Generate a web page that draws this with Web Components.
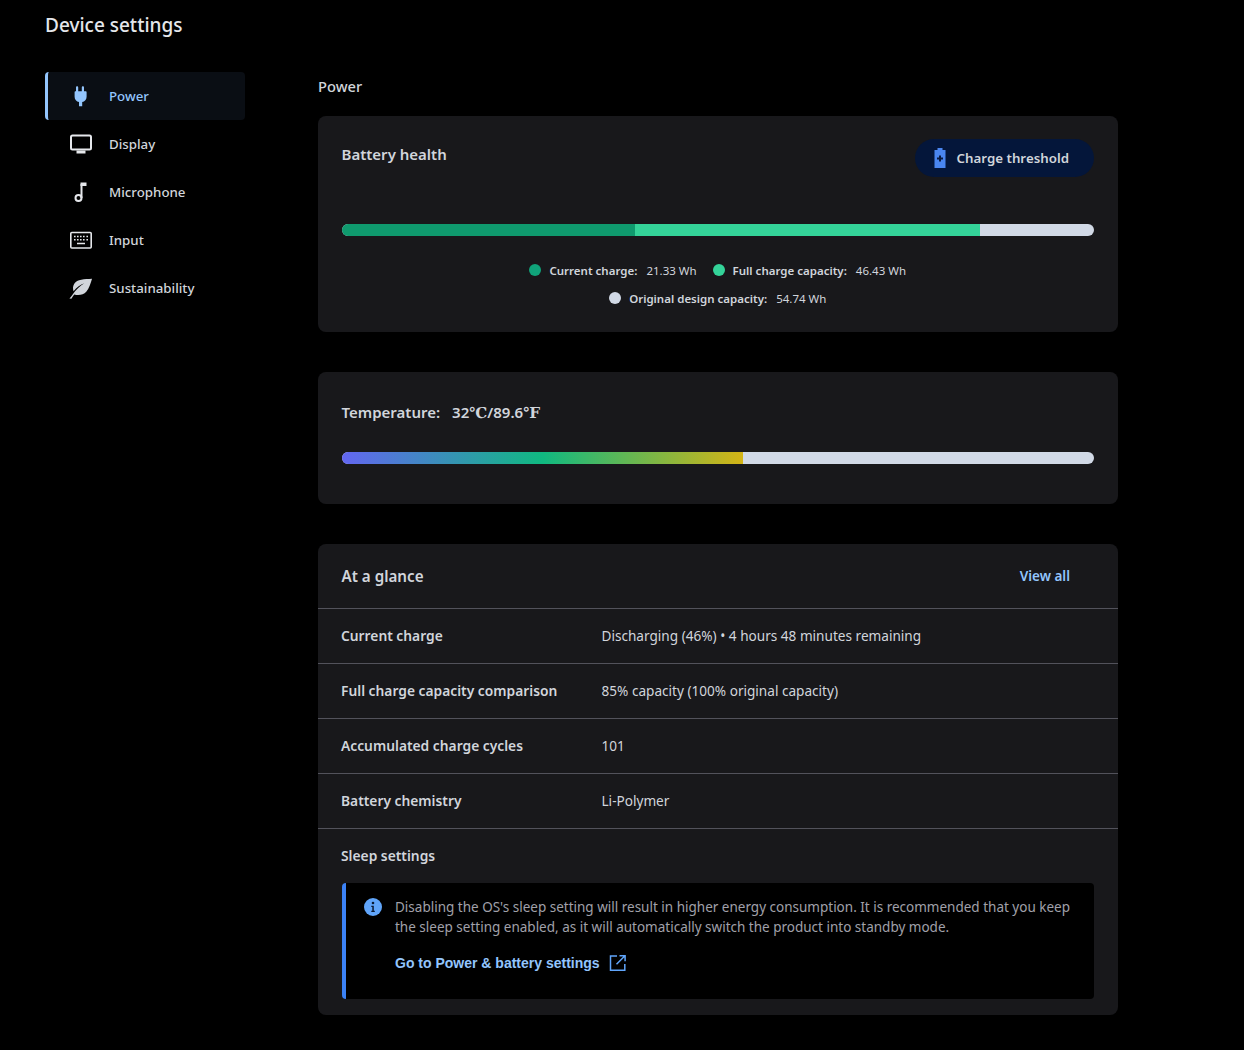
<!DOCTYPE html>
<html><head><meta charset="utf-8"><style>
html,body{margin:0;background:#000;height:1050px;overflow:hidden}
body{font-family:"Noto Sans","Open Sans",sans-serif;color:#d1d5db}
</style></head><body>
<device-page></device-page>
<script>
const el=(name,css,html)=>{customElements.define(name,class extends HTMLElement{constructor(){super();this.attachShadow({mode:'open'}).innerHTML=`<style>${css}</style>${typeof html==='function'?html(this):html}`;}})};

const ICONS={
power:`<svg width="24" height="24" viewBox="0 0 24 24" fill="#93c5fd" style="margin-left:-2px"><path d="M8 3.400c0-.7.5-1.200 1.100-1.200s1.100.5 1.100 1.200v3.800h3.600V3.400c0-.7.5-1.200 1.100-1.200s1.100.5 1.100 1.200v3.800h1.500c.7 0 1.100.4 1.100 1v4.600c0 2.700-1.900 4.800-4.400 5.300v4.100h-3.200v-4.100c-2.500-.5-4.400-2.600-4.400-5.300V8.200c0-.6.400-1 1.100-1H8z"/></svg>`,
display:`<svg width="24" height="24" viewBox="0 0 24 24" fill="none" stroke="#e5e7eb" stroke-width="2"><rect x="2" y="3.500" width="20" height="14" rx="1.500"/><path d="M7.500 20h9" stroke-width="3"/></svg>`,
mic:`<svg width="24" height="24" viewBox="0 0 24 24" fill="none" stroke="#e5e7eb" stroke-width="2"><circle cx="9.500" cy="18" r="3"/><path d="M12.500 18V4"/><path d="M11.500 2.500h6v3.500h-6z" fill="#e5e7eb" stroke="none"/></svg>`,
input:`<svg width="24" height="24" viewBox="0 0 24 24" fill="none"><rect x="1.800" y="4.500" width="20.400" height="15.500" rx="1" stroke="#e5e7eb" stroke-width="1.600"/><path d="M5 8.500h1.600M8 8.500h1.600M11 8.500h1.600M14 8.500h1.600M17.400 8.500H19M5 11.800h1.600M8 11.800h1.600M11 11.800h1.600M14 11.800h1.600M17.400 11.800H19M8 15.500h8" stroke="#e5e7eb" stroke-width="1.600"/></svg>`,
leaf:`<svg width="26" height="24" viewBox="0 0 26 24" style="margin-left:-1px"><path d="M25 2.500C17 3 9.500 3 6.500 7.500 4.800 10 5 13 5.800 15.500 9 11 13 8.500 17 7 13 9.500 8 13.500 5 18.500 3.800 20.300 2.800 21.500 1.500 23l2 .2c1-1.600 2-3.200 3-4.400 4.500 1.200 9.500.5 12.500-2.800 3-3.300 4.500-8.500 6-13.500z" fill="#d1d5db"/></svg>`,
battery:`<svg width="12" height="20" viewBox="0 0 12 20"><path d="M3.500 0h5v2h3v18H.500V2h3z" fill="#4a86f0"/><path d="M6 7.500v6M3 10.500h6" stroke="#0a1a40" stroke-width="2"/></svg>`,
info:`<svg width="18" height="18" viewBox="0 0 18 18"><circle cx="9" cy="9" r="9" fill="#60a5fa"/><circle cx="9" cy="5" r="1.300" fill="#0a1a33"/><path d="M7.300 7.700h2.500v5h1v1.200H7.300v-1.200h1v-3.800h-1z" fill="#0a1a33"/></svg>`,
ext:`<svg width="18" height="18" viewBox="0 0 18 18" fill="none" stroke="#60a5fa" stroke-width="1.500"><path d="M8 2H1.500v14.300h14.300V10M10.500 1.700h5.600v5.600M16 1.700L7.500 10.200"/></svg>`
};

el('nav-item',`:host{display:flex;align-items:center;height:48px;box-sizing:border-box;width:200px;border-radius:4px;font-size:13.300px;line-height:46px;font-weight:500;color:#d1d5db;padding-left:21px;border-left:3px solid transparent}
:host([active]){background:#0a0e14;color:#93c5fd;border-left-color:#93c5fd}
.i{width:24px;height:24px;display:flex;align-items:center;justify-content:center;margin-right:16px}`,
h=>`<span class="i">${ICONS[h.getAttribute('icon')]}</span><slot></slot>`);

el('side-nav',`:host{display:flex;flex-direction:column;width:200px;flex:none}`,`<slot></slot>`);

el('panel-card',`:host{display:block;background:#18181b;border-radius:8px;box-sizing:border-box}`,`<slot></slot>`);

el('bar-track',`:host{display:flex;height:12px;border-radius:6px;overflow:hidden;background:#d1d9e6}`,`<slot></slot>`);

el('legend-item',`:host{display:inline-flex;align-items:center;font-size:11.500px;color:#d1d5db;white-space:nowrap}
i{width:12px;height:12px;border-radius:50%;margin-right:8px;background:var(--c)}
b{font-weight:600;margin-right:9px}`,h=>`<i></i><b>${h.getAttribute('label')}</b><slot></slot>`);

el('info-row',`:host{display:flex;align-items:center;height:55px;box-sizing:border-box;border-top:1px solid #52525b;padding:0 0 2px 23px;font-size:13.600px}
b{width:260.500px;flex:none;font-weight:600;font-size:13.800px;color:#d1d5db}
span{color:#d1d5db;padding-top:1px}`,h=>`<b>${h.getAttribute('label')}</b><span><slot></slot></span>`);

el('sleep-note',`:host{display:flex;background:#000;border-left:4px solid #3b82f6;border-radius:4px;margin:1px 24px 16px;height:116px;box-sizing:border-box;padding:14px 0 0 18px}
.ic{width:18px;margin:1px 13px 0 0;flex:none}
p{margin:0;font-size:13.500px;line-height:20px;color:#a1a1aa}
a{display:flex;align-items:center;margin-top:17px;font:bold 14px "Liberation Sans",sans-serif;color:#93c5fd}
a svg{margin-left:9px}`,`<div class="ic">${ICONS.info}</div><div><p><slot></slot></p><a>Go to Power &amp; battery settings ${ICONS.ext}</a></div>`);

el('device-page',`:host{display:block;width:1244px;height:1050px;box-sizing:border-box;padding:0 0 0 45px}
h1{margin:0;height:72px;padding-top:11px;box-sizing:border-box;font-size:19px;line-height:28px;font-weight:500;color:#e5e7eb}
.cols{display:flex;gap:73px}
main{width:800px;flex:none}
h2{margin:0;height:44px;font-size:14.700px;line-height:28px;font-weight:500;color:#d1d5db}
panel-card{margin-bottom:40px}
.c1{height:216px;padding:24px 24px 0 23.500px}
.top{display:flex;justify-content:space-between;align-items:flex-start;height:84px}
h3{margin:0;font-size:15.200px;line-height:28px;font-weight:600;color:#d1d5db}
.c1 h3{font-size:15px}
.btn{display:flex;align-items:center;height:38px;margin-top:-1px;box-sizing:border-box;padding:0 25px 0 19px;border-radius:19px;background:#04163a;font-size:13.300px;font-weight:600;color:#d1d5db;gap:11px}
.seg{height:100%}
.leg{display:flex;flex-wrap:wrap;justify-content:center;gap:0 16px;margin:20px auto 0;width:420px}
legend-item{height:28px}
.c2{height:132px;padding:26px 24px 0 23.500px}
.temp{font-size:15px;font-weight:600;line-height:28px;display:flex;color:#d1d5db}
.temp span{margin-left:12px}
.temp em{font-style:normal;font-family:"DejaVu Serif",serif;font-weight:700}
.c2 bar-track{margin-top:25px}
.grad{width:53.300%;height:100%;background:linear-gradient(90deg,#6366f1 0%,#10b981 50%,#d4b416 100%)}
.c3{height:471px;margin:0}
.head{display:flex;justify-content:space-between;align-items:center;height:64px;padding:0 48px 0 23.500px}
.head a{font-size:13.500px;font-weight:600;color:#93c5fd}
.sl{border-top:1px solid #52525b;padding:14px 0 0 23px;height:54px;box-sizing:border-box;font-size:13.800px;font-weight:600;line-height:26px}
`,`<h1>Device settings</h1><div class="cols"><side-nav>
<nav-item icon="power" active>Power</nav-item><nav-item icon="display">Display</nav-item><nav-item icon="mic">Microphone</nav-item><nav-item icon="input">Input</nav-item><nav-item icon="leaf">Sustainability</nav-item>
</side-nav><main><h2>Power</h2>
<panel-card class="c1"><div class="top"><h3>Battery health</h3><div class="btn">${ICONS.battery}Charge threshold</div></div>
<bar-track><div class="seg" style="width:293px;background:#0f9a6e"></div><div class="seg" style="width:345px;background:#34d399"></div></bar-track>
<div class="leg"><legend-item style="--c:#10a37a" label="Current charge:">21.33 Wh</legend-item><legend-item style="--c:#34d399" label="Full charge capacity:">46.43 Wh</legend-item><legend-item style="--c:#d1d9e6" label="Original design capacity:">54.74 Wh</legend-item></div>
</panel-card>
<panel-card class="c2"><div class="temp">Temperature: <span>32<em>℃</em>/89.6<em>℉</em></span></div><bar-track><div class="grad"></div></bar-track></panel-card>
<panel-card class="c3"><div class="head"><h3>At a glance</h3><a>View all</a></div>
<info-row label="Current charge">Discharging (46%) • 4 hours 48 minutes remaining</info-row>
<info-row label="Full charge capacity comparison">85% capacity (100% original capacity)</info-row>
<info-row label="Accumulated charge cycles">101</info-row>
<info-row label="Battery chemistry">Li-Polymer</info-row>
<div class="sl">Sleep settings</div>
<sleep-note>Disabling the OS's sleep setting will result in higher energy consumption. It is recommended that you keep the sleep setting enabled, as it will automatically switch the product into standby mode.</sleep-note>
</panel-card></main></div>`);
</script></body></html>
